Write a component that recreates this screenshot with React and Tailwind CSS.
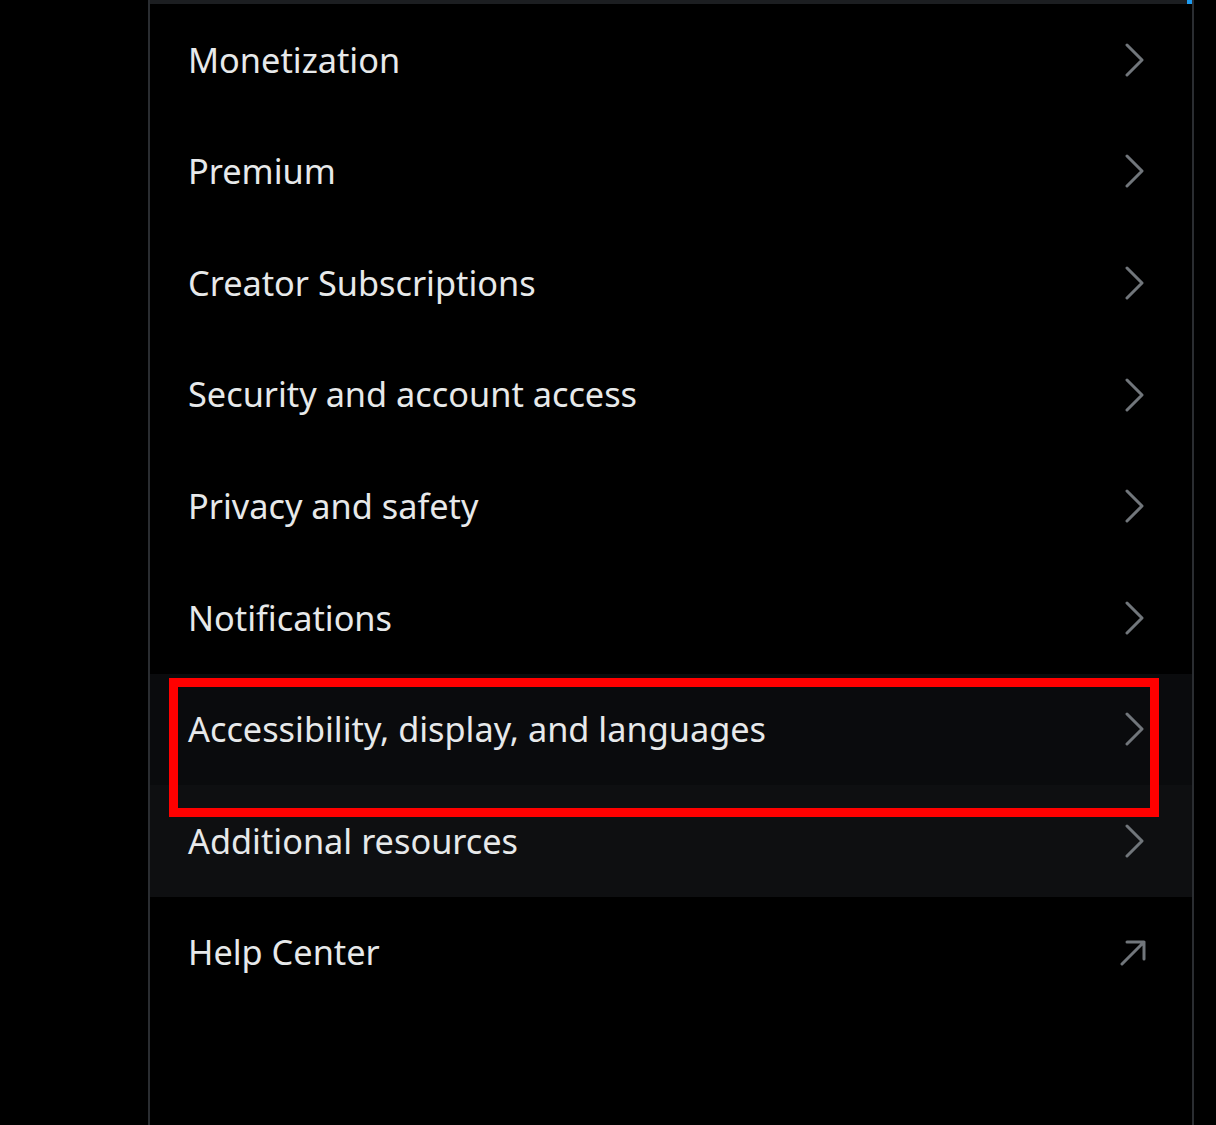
const items = [
  { label: "Monetization" },
  { label: "Premium" },
  { label: "Creator Subscriptions" },
  { label: "Security and account access" },
  { label: "Privacy and safety" },
  { label: "Notifications" },
  { label: "Accessibility, display, and languages", bg: "bg-[#0a0b0d]" },
  { label: "Additional resources", bg: "bg-[#0e0f11]" },
  { label: "Help Center", external: true },
];

function Chevron() {
  return (
    <svg width="20" height="34" viewBox="0 0 20 34" fill="none">
      <polyline
        points="3,2 18,17 3,32"
        stroke="#71767b"
        strokeWidth="3"
        strokeLinecap="round"
        strokeLinejoin="round"
      />
    </svg>
  );
}

function ExternalArrow() {
  return (
    <svg width="26" height="26" viewBox="0 0 26 26" fill="none" className="-mr-[2px]">
      <path
        d="M2 24 L24 2 M7 2 H24 V19"
        stroke="#71767b"
        strokeWidth="3"
        strokeLinecap="round"
        strokeLinejoin="round"
      />
    </svg>
  );
}

export default function App() {
  return (
    <div className="relative w-[1216px] h-[1125px] bg-black flex overflow-hidden font-['Noto_Sans',sans-serif]">
      <div className="w-[148px] shrink-0" />
      <div className="w-[2px] shrink-0 bg-[#2a2d31]" />

      <main className="w-[1042px] shrink-0 flex flex-col">
        {/* top strip */}
        <div className="h-[4px] flex">
          <div className="flex-1 bg-[#1c1e21]" />
          <div className="w-[5px] bg-[#1d9bf0]" />
        </div>

        {items.map((item) => (
          <div
            key={item.label}
            className={`h-[111.6px] flex items-center justify-between pl-[38px] pr-[48px] ${item.bg || ""}`}
          >
            <span className="text-[34.3px] leading-none text-[#e7e9ea]">
              {item.label}
            </span>
            {item.external ? <ExternalArrow /> : <Chevron />}
          </div>
        ))}
      </main>

      <div className="w-[2px] shrink-0 bg-[#2a2d31]" />
      <div className="flex-1" />

      {/* annotation box */}
      <div className="absolute left-[169px] top-[678px] w-[990px] h-[139px] border-[9px] border-[#ff0000]" />
    </div>
  );
}
